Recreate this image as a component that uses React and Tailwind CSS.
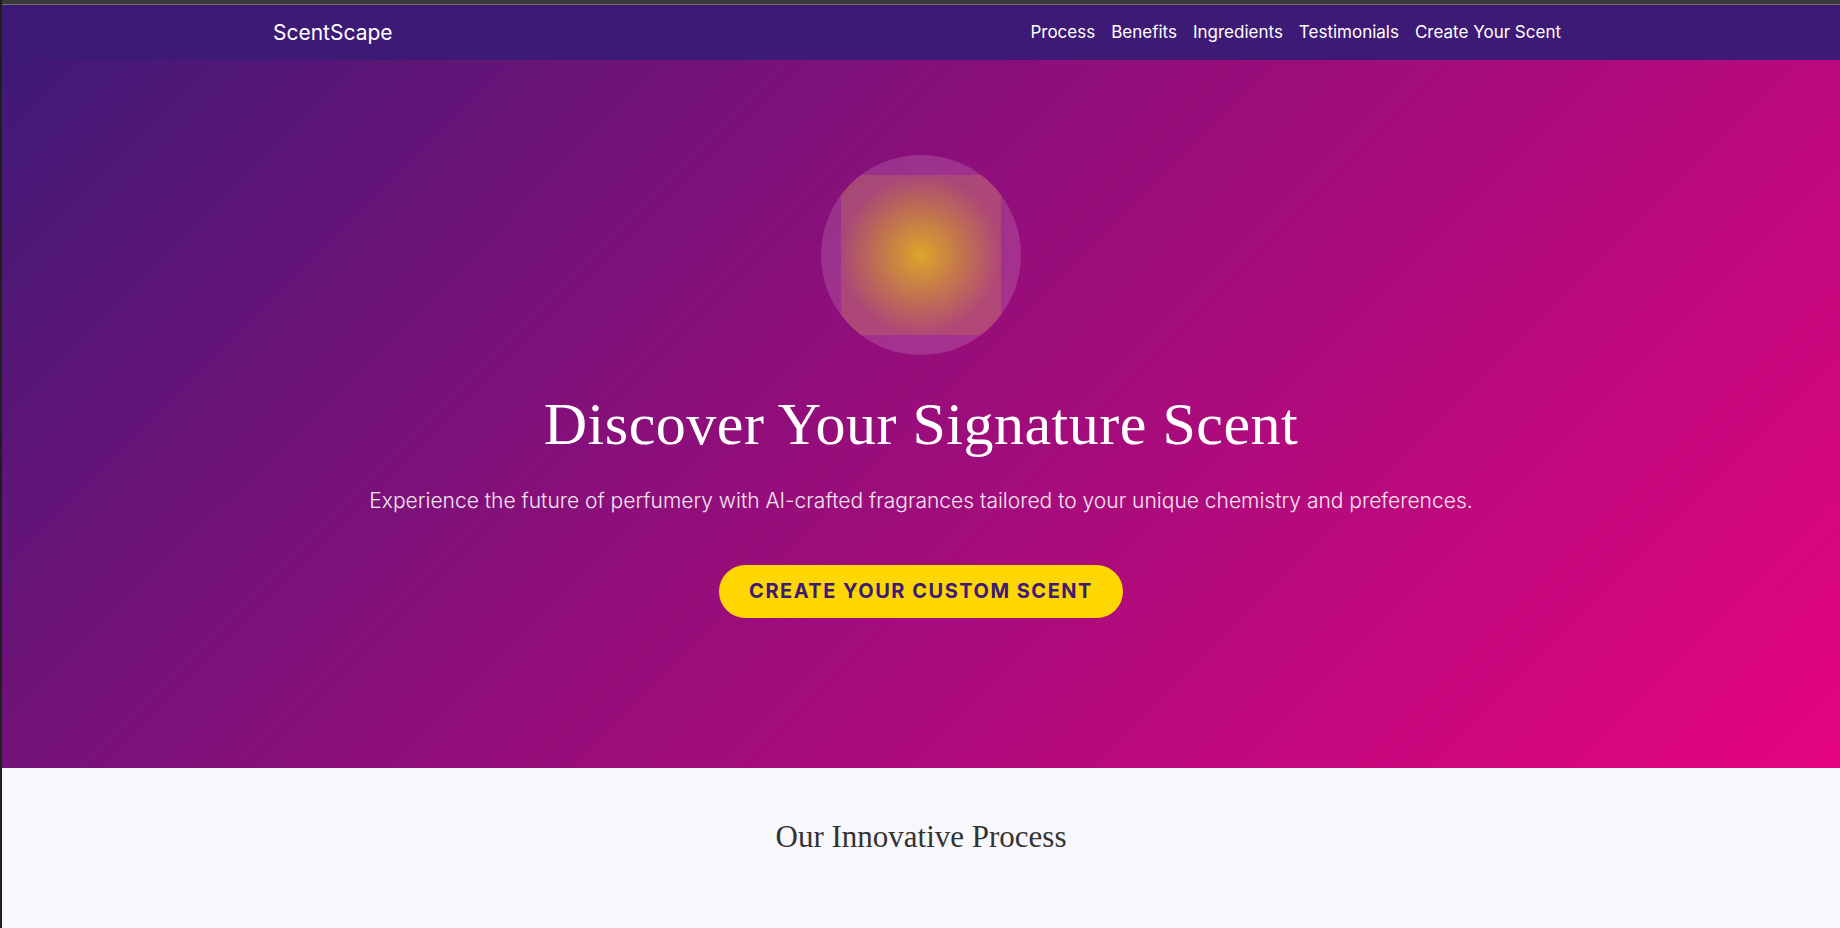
import React from "react";

const navLinks = ["Process", "Benefits", "Ingredients", "Testimonials", "Create Your Scent"];

function Nav() {
  return (
    <nav className="bg-[#3d1a75]">
      <div className="mx-auto flex h-[55px] max-w-[1296px] items-center justify-between pr-[8px]">
        <a className="text-[21px] text-white">ScentScape</a>
        <ul className="flex items-center gap-[16px] text-[17px] text-white">
          {navLinks.map((link) => (
            <li key={link}>
              <a>{link}</a>
            </li>
          ))}
        </ul>
      </div>
    </nav>
  );
}

function Hero() {
  return (
    <section className="flex h-[708px] flex-col items-center bg-[linear-gradient(135deg,#3f1a76_0%,#8a0f7a_40%,#e5047f_100%)] pt-[95px] text-center text-white">
      <div className="flex h-[200px] w-[200px] items-center justify-center overflow-hidden rounded-full bg-white/15">
        <div className="h-[160px] w-[160px] shrink-0 bg-[radial-gradient(circle_closest-side,#dca52a_0%,rgba(218,165,32,0.55)_55%,rgba(218,150,40,0.22)_100%)]" />
      </div>
      <h1 className="mt-[33px] font-['Liberation_Serif',serif] text-[60px] font-normal leading-[1.2] tracking-[0.5px]">
        Discover Your Signature Scent
      </h1>
      <p className="mt-[25px] text-[21px] font-light text-white/90">
        Experience the future of perfumery with AI-crafted fragrances tailored to your unique chemistry and preferences.
      </p>
      <button className="mt-[48px] h-[53px] w-[404px] rounded-full bg-[#ffd700] text-[20px] font-bold uppercase tracking-[1.5px] text-[#3d1a75]">
        Create Your Custom Scent
      </button>
    </section>
  );
}

function ProcessIntro() {
  return (
    <section className="min-h-[160px] bg-[#f8f7fc] pt-[46px] text-center">
      <h2 className="font-['Liberation_Serif',serif] text-[31px] text-[#333]">Our Innovative Process</h2>
    </section>
  );
}

export default function App() {
  return (
    <div className="min-h-screen border-l-2 border-[#1f1f1f] bg-[#f8f7fc] font-['Inter',sans-serif]">
      <div className="h-[4px] bg-[#3a3a3a]" />
      <div className="h-[1px] bg-[#6d6d6d]" />
      <Nav />
      <Hero />
      <ProcessIntro />
    </div>
  );
}
